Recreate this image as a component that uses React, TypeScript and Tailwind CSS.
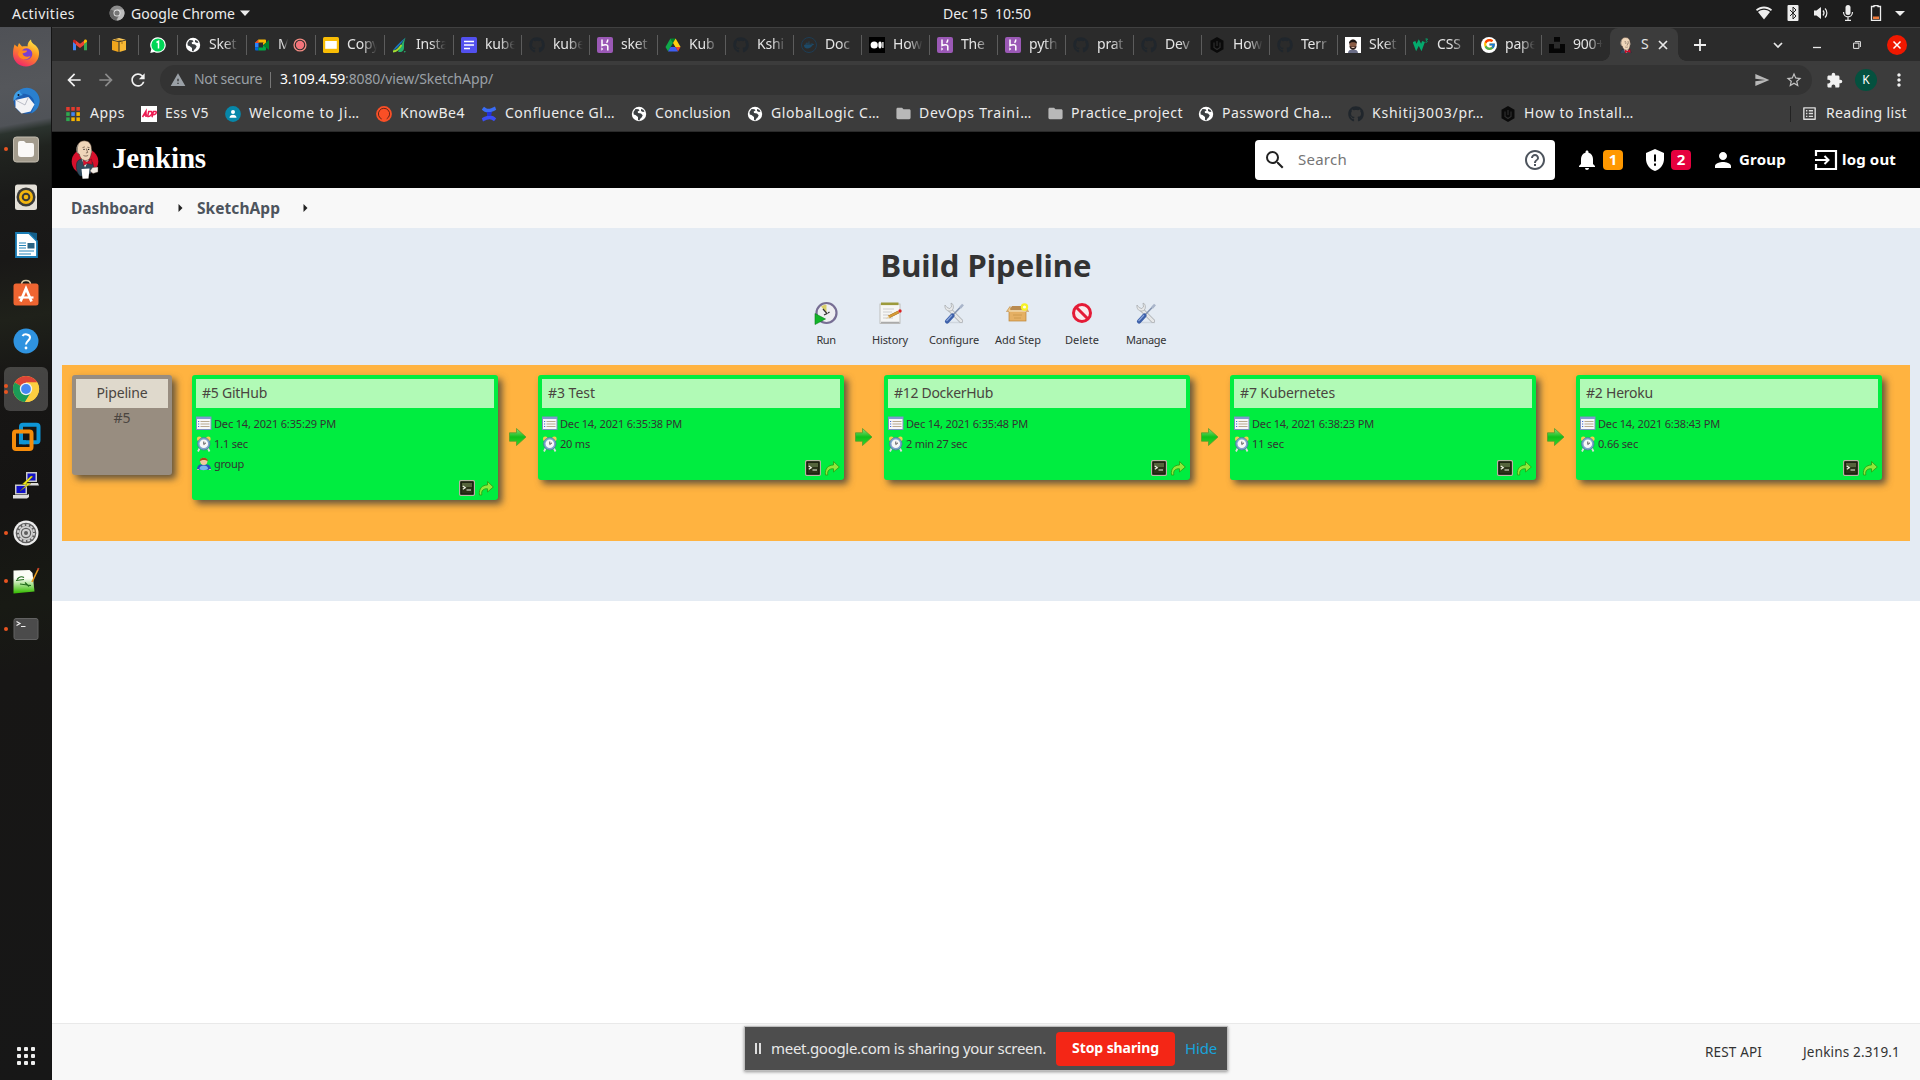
import { useLayoutEffect, useRef, useState } from "react";
import type { ReactNode } from "react";
import {
  MdArrowBack, MdArrowForward, MdRefresh, MdWarning, MdMoreVert, MdFolder, MdExtension, MdSend,
  MdStarBorder, MdNotifications, MdPerson, MdHelpOutline, MdSearch, MdOutlineListAlt,
} from "react-icons/md";
import { FaGithub, FaDocker } from "react-icons/fa";
import { FcGoogle } from "react-icons/fc";

/* Text that spreads its letters evenly over the width of its box. */
function Fit({ className, children }: { className: string; children: string }) {
  const inner = useRef<HTMLSpanElement>(null);
  const [spacing, setSpacing] = useState(0);
  useLayoutEffect(() => {
    const el = inner.current;
    if (!el || !el.parentElement) return;
    const room = el.parentElement.clientWidth - el.getBoundingClientRect().width;
    setSpacing(room / children.length);
  }, [children]);
  return (
    <span className={"block shrink-0 whitespace-pre " + className}>
      <span ref={inner} style={{ letterSpacing: spacing }}>{children}</span>
    </span>
  );
}

/* ---------- small logos ---------- */

function Svg({ s = 16, box = "0 0 16 16", children, className = "" }: { s?: number; box?: string; children: ReactNode; className?: string }) {
  return <svg width={s} height={s} viewBox={box} className={"shrink-0 " + className}>{children}</svg>;
}

const Gmail = () => (
  <Svg>
    <path d="M1 3.5v9.700h3V7L1 4.500z" fill="#4285f4" />
    <path d="M12 13.200h3V4.500L12 7z" fill="#34a853" />
    <path d="M12 3.800V7l3-2.300V4c0-1.600-1.600-2-2.500-1.200z" fill="#fbbc04" />
    <path d="M4 3.800l4 3 4-3V8l-4 3-4-3z" fill="#ea4335" />
    <path d="M1 4v1l3 2.600V3.800L3.300 3C2.300 2.300 1 2.700 1 4z" fill="#c5221f" />
  </Svg>
);
const Box = () => (
  <Svg>
    <path d="M1 3.500l6.500 1.500v10L1 13z" fill="#f0a51d" />
    <path d="M15 3.500L8.500 5v10L15 13z" fill="#f7b733" />
    <path d="M1.300 2.700L8 1l6.700 1.700L8 4.200z" fill="#fcc95a" />
    <path d="M4 2.200l7 1.800v3" fill="none" stroke="#8a5c0d" strokeWidth=".7" />
  </Svg>
);
const WhatsApp = () => (
  <Svg>
    <path d="M8 .2a7.800 7.800 0 1 1-3.700 14.700L.3 16l1-4A7.800 7.800 0 0 1 8 .2z" fill="#fff" />
    <circle cx="8" cy="8" r="6.600" fill="#00d757" />
    <path d="M6.500 5.500L8.500 4.300v7.200" fill="none" stroke="#fff" strokeWidth="1.500" />
  </Svg>
);
const Globe = () => (
  <Svg>
    <circle cx="8" cy="8" r="7.200" fill="#fff" />
    <path d="M4.500 3l3 .2 1 1.300-1.800 1 .3 1.600 3 .4 1.700 1.800-.9 2-1.800 1.700-.5 1.500L7 14v-3L4.500 9 2.700 8.600 2.500 6zM10 3l2.300.7 1.200 1.800-1.500.5-2-1z" fill="#3c4043" />
  </Svg>
);
const Meet = () => (
  <Svg>
    <path d="M1 6l3.500-3.500H10V5.500H4.500V6z" fill="#fbbc04" />
    <path d="M1 6l3.500-3.500V6z" fill="#ea4335" />
    <path d="M1 6h3.500v4.500H1z" fill="#2684fc" />
    <path d="M1 10.500h3.500v3H2a1 1 0 0 1-1-1z" fill="#0066da" />
    <path d="M4.500 10.500H9V8l3 2.500v2a1 1 0 0 1-1 1H4.500z" fill="#00ac47" />
    <path d="M9 8l6-5v10l-3-2.500z" fill="#00832d" />
    <path d="M10 2.500h1a1 1 0 0 1 1 1v2L9 8V5.500h1z" fill="#ffba00" />
  </Svg>
);
const Recording = () => (
  <Svg s={14}>
    <circle cx="8" cy="8" r="6.800" fill="none" stroke="#f28b82" strokeWidth="1.500" />
    <circle cx="8" cy="8" r="4.800" fill="#f4737a" />
  </Svg>
);
const Slides = () => (
  <Svg><rect width="16" height="16" rx="1.500" fill="#f9bd05" /><rect x="2.200" y="4" width="11.600" height="7.800" fill="#fff" /></Svg>
);
const Leaf = () => (
  <Svg>
    <path d="M13.500 .5C9 4 4 9 .8 13.500 4 13 8 8 13.500 .5z" fill="#1677c4" />
    <path d="M13.500 .5C9.500 6 9 9 6 14.500c1 .8 3 .8 4 0 2.500-1.500 2-4 2-7 0-3 1-5 1.500-7z" fill="#25b06b" />
    <path d="M1 14.500c3.500-.2 6-2.500 8.500-6.500" fill="none" stroke="#a2dc31" strokeWidth="1.800" />
    <path d="M12 14.800l1.500-.3" stroke="#25b06b" strokeWidth="1.200" />
  </Svg>
);
const Forms = () => (
  <Svg><rect width="16" height="16" rx="1.500" fill="#5250ee" /><path d="M3 4.500h10M3 8h10M3 11.500h6" stroke="#fff" strokeWidth="1.600" /></Svg>
);
const Heroku = () => (
  <Svg>
    <rect width="16" height="16" rx="2" fill="#9b59b6" />
    <path d="M5 2.500v6c2-1 5.800-1.500 5.800.8v4.200M10.800 2.500c0 1.500-.5 2.500-1.300 3.200" fill="none" stroke="#fff" strokeWidth="1.500" />
    <path d="M4.300 10.300l2 1.700-2 1.700z" fill="#fff" />
  </Svg>
);
const Drive = () => (
  <Svg>
    <path d="M5.400 1.500h5.200L8 6z" fill="#00832d" /><path d="M5.400 1.500L.5 10l2.600 4.500L8 6z" fill="#0fa84a" />
    <path d="M10.600 1.500l5 8.500h-5.200L8 6z" fill="#ffcf10" /><path d="M15.500 10L13 14.500 10.400 10z" fill="#ea4335" />
    <path d="M5.600 10h4.800L13 14.500H3z" fill="#3f5ff3" />
  </Svg>
);
const Medium = () => (
  <Svg><rect width="16" height="16" fill="#000" /><circle cx="5.200" cy="8" r="3.600" fill="#fff" /><ellipse cx="11" cy="8" rx="1.700" ry="3.400" fill="#fff" /><rect x="13.300" y="5" width="1.200" height="6" fill="#fff" /></Svg>
);
const Hex = () => (
  <Svg><path d="M8 0l6.500 3.800v8.400L8 16l-6.500-3.800V3.800z" fill="#0a0a0a" /><path d="M5 5.500v5l3 2 3-2v-5M8 4v5" fill="none" stroke="#2e2e2e" strokeWidth="1.200" /></Svg>
);
const Octo = () => <FaGithub size={16} color="#20262c" className="shrink-0" />;
const Docker = () => (
  <span className="flex size-4 shrink-0 items-center justify-center rounded-full border border-[#1d3d55] text-[#1d4a68]"><FaDocker size={10} /></span>
);
const Portrait = () => (
  <Svg>
    <rect width="16" height="16" fill="#fff" /><path d="M3 16c0-2.500 2-3.500 5-3.500s5 1 5 3.500z" fill="#6a6d86" />
    <ellipse cx="8" cy="7.500" rx="3.600" ry="4.800" fill="#8a5c46" /><path d="M4 7c-.5-6 8.500-6 8 0-1-2.500-7-2.500-8 0z" fill="#1c1514" />
    <path d="M4.500 9c1 1 6 1 7 0 0 5-7 5-7 0z" fill="#2c1d1a" /><path d="M6.500 10.500h3" stroke="#d9b7a6" />
  </Svg>
);
const W3 = () => (
  <Svg><path d="M1 4.500l2.300 6L5.800 5.500l2.500 5 2.200-6" fill="none" stroke="#04aa6d" strokeWidth="3" /><path d="M12.500 2h2l-1.200 1.500c1.500.2 1.200 2.200-.8 1.700" fill="none" stroke="#04aa6d" /></Svg>
);
const GoogleG = () => (
  <span className="flex size-4 shrink-0 items-center justify-center rounded-full bg-white"><FcGoogle size={13} /></span>
);
const Unsplash = () => <Svg><path d="M5 0h6v4.700H5zM0 7h5v4.500h6V7h5v9H0z" fill="#050505" /></Svg>;

function Butler({ w, h, box, badge = true }: { w: number; h: number; box: string; badge?: boolean }) {
  return (
    <svg width={w} height={h} viewBox={box} className="shrink-0">
      {badge && <ellipse cx="14" cy="21.500" rx="13.300" ry="12.800" fill="#d6102c" />}
      <path d="M5.500 24c.5-3.500 3-5 6-5l6 .5c3 .5 4.500 3 5 7l-2 6-5 3.500H9c-3-3-4.200-7-3.500-12z" fill="#2f4a5c" stroke="#16242e" strokeWidth=".5" />
      <path d="M10.500 18.500l3.500 9 4-8z" fill="#f4f0e9" />
      <path d="M6.200 8.500C6 4 9 .8 13.200 .8c4.800 0 7.300 3.200 7.300 8.200 0 6-1 11.500-5.800 11.500-3.700 0-5.700-3-6.500-6.500-1.700-.3-2.500-2-2-5.500z" fill="#efd6ba" stroke="#4b3a30" strokeWidth=".6" />
      <path d="M6.200 9c.8-1.300 1.300-3 1.600-5C5.300 5.500 4.700 9 5.800 12.500l1.900 1.200z" fill="#9b9186" />
      <path d="M20.500 8.500c.7 1.500.8 3 .3 4.500l-.8-.5z" fill="#9b9186" />
      <path d="M11.500 7.600l2.400-.7M16.300 7.200l2.200.4M15.300 8.500l1.400 4-1.800.5M12.500 15.500c1.700.8 3.300.8 4.700-.2" fill="none" stroke="#5b463a" strokeWidth=".7" />
      <circle cx="13" cy="9.400" r=".7" fill="#222" /><circle cx="17.600" cy="9.400" r=".7" fill="#222" />
      <path d="M12 20l4 2 4.500-3 .8 5.500-5-1-3.800 2z" fill="#d6102c" stroke="#5c0b18" strokeWidth=".4" />
      <path d="M10.500 29l8-.5-1 10-6 .3z" fill="#fff" />
      <path d="M21.500 27.500l5.500-.5v5l-5 1.500-3-2.500z" fill="#f2ede6" stroke="#4b3a30" strokeWidth=".4" />
    </svg>
  );
}

const AppsGrid = () => (
  <Svg>
    {["#e33b2e", "#e33b2e", "#e33b2e", "#2fa84f", "#4285f4", "#f5b400", "#2fa84f", "#f5b400", "#f5b400"].map((c, i) => (
      <rect key={i} x={1.2 + (i % 3) * 5.1} y={1 + Math.floor(i / 3) * 5.2} width="3.500" height="3.700" fill={c} />
    ))}
  </Svg>
);
const Adp = () => (
  <Svg>
    <rect width="16" height="16" fill="#fff" />
    <path d="M1.500 11l3.500-6v6M3 9h3M6.500 10.800L7.700 5.500h2.600c1.500 1.500 0 5.300-3.800 5.300M11 11.300l1.400-5.800H15c.8 1.500-.5 3.200-3 3.200" fill="none" stroke="#ed1b52" strokeWidth="1.500" />
  </Svg>
);
const Person = () => (
  <Svg><circle cx="8" cy="8" r="7.900" fill="#0787a9" /><circle cx="8" cy="6" r="2" fill="#fff" /><path d="M4.500 11.800c0-4 7-4 7 0z" fill="#fff" /></Svg>
);
const KnowBe = () => (
  <Svg><circle cx="8" cy="8" r="7.900" fill="#fa4f26" /><path d="M5.700 13a5.600 5.600 0 1 1 5-.2" fill="none" stroke="#4f1f16" strokeWidth=".9" /></Svg>
);
const Confluence = () => (
  <Svg><path d="M.8 3.500L3 .8c3 2.500 5 3 11-.3l1.200 3.300C9 7.500 4 7.500 .8 3.500z" fill="#3a6cf5" /><path d="M15.200 12.500L13 15.200c-3-2.500-5-3-11 .3L.8 12.200C7 8.500 12 8.500 15.200 12.500z" fill="#3a4cf5" /><path d="M6 6h5l-1 4H6z" fill="#2430d8" /></Svg>
);
const FolderIcon = () => <MdFolder size={17} color="#b8b8b8" className="shrink-0" />;

/* ---------- desktop ---------- */

function TopBar() {
  return (
    <div className="flex h-[27px] shrink-0 items-center bg-[#1d1d1d] pb-px text-[14px] leading-[27px] text-[#ededed]">
      <Fit className="ml-3 w-[63px]">Activities</Fit>
      <Svg s={16} className="ml-[34px]">
        <circle cx="8" cy="8" r="7.500" fill="#8c8c8c" /><path d="M8 8L1.500 4.300A7.500 7.500 0 0 0 7 15.400l3-6z" fill="#666" /><path d="M8 4.500h6.600a7.500 7.500 0 0 1-7 11L11 9z" fill="#bdbdbd" /><circle cx="8" cy="8" r="3.500" fill="#e5e5e5" /><circle cx="8" cy="8" r="2.600" fill="#777" />
      </Svg>
      <Fit className="ml-[6px] w-[104px]">Google Chrome</Fit>
      <Svg s={10} box="0 0 10 10" className="ml-[5px]"><path d="M0 2.500h10L5 8z" fill="#ededed" /></Svg>
      <Fit className="ml-[693px] w-[88px]">Dec 15  10:50</Fit>
      <div className="ml-auto mr-[15px] flex items-center">
        <Svg className="mr-[13px]"><path d="M0 4.500C4.500 .5 11.500 .5 16 4.500L15 6C11 2.500 5 2.500 1 6z" fill="#ededed" /><path d="M2 7c3.500-3 8.500-3 12 0l-6 7.500z" fill="#ededed" /></Svg>
        <Svg className="mr-[12px]"><rect x="2.500" y="0" width="11" height="16" rx="1" fill="#ededed" /><path d="M5 5l6 6-3 3V2l3 3-6 6" fill="none" stroke="#222" strokeWidth="1" /></Svg>
        <Svg className="mr-[11px]"><path d="M1 5.500h2.500L8 2v12l-4.500-3.500H1z" fill="#ededed" /><path d="M10 5.500c1.300 1.500 1.300 3.500 0 5M12 3.500c2.500 2.500 2.500 6.500 0 9" fill="none" stroke="#ededed" strokeWidth="1.200" /></Svg>
        <Svg className="mr-[12px]"><rect x="5.500" y="0" width="5" height="10" rx="2.500" fill="#ededed" /><path d="M3.500 7c0 6.500 9 6.500 9 0M8 12v3M5 15.300h6" fill="none" stroke="#ededed" strokeWidth="1.200" /></Svg>
        <Svg className="mr-[11px]"><path d="M6 1.500V.5h4v1h2.500v14h-9v-14z" fill="none" stroke="#ededed" strokeWidth="1.300" /><rect x="5" y="11.500" width="6" height="2.600" fill="#ee7a3a" /></Svg>
        <Svg s={10} box="0 0 10 10"><path d="M0 3h10L5 8z" fill="#ededed" /></Svg>
      </div>
    </div>
  );
}

const dock: { dots: number; active?: boolean; icon: ReactNode }[] = [
  { dots: 0, icon: (
    <Svg s={28} box="0 0 28 28">
      <defs>
        <linearGradient id="fx" x1=".8" y1="0" x2=".3" y2="1"><stop offset="0" stopColor="#fff04a" /><stop offset=".45" stopColor="#ff9420" /><stop offset="1" stopColor="#f0246c" /></linearGradient>
      </defs>
      <path d="M2.500 5.500l3 2.500 1.500-4 3 3.500c2-.5 4-.5 5.500 0C15.500 4 17 2 19 .5c0 3 2 4 4 5.500 2.500 2 4.500 5 4 9.500C26.500 22.500 21 27.500 14 27.500S1 22 1 15c0-4 .5-6 1.500-9.500z" fill="url(#fx)" />
      <circle cx="14.500" cy="15" r="5.800" fill="#7a3fd0" />
      <path d="M7 12c3-1.500 5 0 8-.5 0 2-2.500 2.500-4.500 3 1 3.500 5 4 8 2.500-2 5-11.500 4.500-12.500-2z" fill="#ff8a1f" />
    </Svg>) },
  { dots: 0, icon: (
    <Svg s={28} box="0 0 28 28">
      <circle cx="14.500" cy="14" r="12.800" fill="#1c5fb4" />
      <path d="M3 9C6 2 13-.5 19 1.500c7 2.500 10 10 8 16-1 4-4 7.500-8 9 4-7 5-14-1-18-5-3-11-2-15 .5z" fill="#2a80d0" />
      <path d="M3.500 13l13-3 6 7.500-4 7-9 2-6-6z" fill="#f3f3f5" /><path d="M3.500 13l9.500 5 3.500-8" fill="none" stroke="#b9bcc6" />
      <path d="M1.500 14C1 8 4 4 8 3.500c-1 1.500 1 3 3 4.500-3 0-6 2-9.500 6z" fill="#3f9fe6" />
      <circle cx="6.500" cy="8" r="1" fill="#112" />
    </Svg>) },
  { dots: 1, icon: (
    <Svg s={28} box="0 0 28 28"><rect x="1.500" y="2" width="25" height="25" rx="3" fill="#a39c8d" stroke="#c3bdb0" /><path d="M6 8a2 2 0 0 1 2-2h4l2 2h6a2 2 0 0 1 2 2v9a3 3 0 0 1-3 3H9a3 3 0 0 1-3-3z" fill="#faf9f7" /></Svg>) },
  { dots: 0, icon: (
    <Svg s={28} box="0 0 28 28"><rect x="3" y="1.500" width="22" height="25.500" rx="2.500" fill="#e4e0d8" /><circle cx="14" cy="14" r="9.500" fill="#3a3a38" /><circle cx="14" cy="14" r="7" fill="#f3b60e" /><circle cx="14" cy="14" r="4.300" fill="#3a3a38" /><circle cx="14" cy="14" r="2.300" fill="#f3b60e" /></Svg>) },
  { dots: 0, icon: (
    <Svg s={28} box="0 0 28 28"><path d="M4 2h13l8 8v16H4z" fill="#fff" stroke="#1a7db5" strokeWidth="1.800" /><path d="M17 1l8 8V2z" fill="#155f8a" /><path d="M7 12h7M7 14.500h7M7 17h7M7 20h15M7 23h12" stroke="#2484b8" strokeWidth="1.200" /><rect x="15.500" y="12" width="7" height="5.500" fill="#2a6383" /></Svg>) },
  { dots: 0, icon: (
    <Svg s={28} box="0 0 28 28"><path d="M9.500 5.500c0-5.500 9-5.500 9 0" fill="none" stroke="#d8c9a4" strokeWidth="1.500" /><rect x="1.500" y="4.500" width="25" height="22" rx="2.500" fill="#ee6531" /><path d="M8.500 22.500L14 9.500l5.500 13" fill="none" stroke="#fff" strokeWidth="2.700" /><path d="M6.500 18.500h15" stroke="#fff" strokeWidth="2.200" /></Svg>) },
  { dots: 0, icon: (
    <Svg s={28} box="0 0 28 28"><circle cx="14" cy="14" r="12.500" fill="#2f93e0" /><path d="M10.500 9c1.500-2.500 7.500-2.300 7.500 1.500 0 3-4 3.500-4 7" fill="none" stroke="#fff" strokeWidth="2" /><circle cx="14" cy="21" r="1.400" fill="#fff" /></Svg>) },
  { dots: 2, active: true, icon: (
    <Svg s={28} box="0 0 28 28">
      <circle cx="14" cy="14" r="13" fill="#fcc934" /><path d="M14 14L2.700 7.500A13 13 0 0 1 25.300 7.500H14z" fill="#dc4437" /><path d="M14 14L2.700 7.500A13 13 0 0 0 13 27l6-10z" fill="#1b9b57" /><path d="M14 7.500h11.300A13 13 0 0 1 13 27l6.200-9.500z" fill="#fcce41" />
      <circle cx="14" cy="14" r="6.200" fill="#f1f1f1" /><circle cx="14" cy="14" r="4.900" fill="#4587f3" />
    </Svg>) },
  { dots: 0, icon: (
    <Svg s={30} box="0 0 30 30"><rect x="10" y="2.800" width="17.500" height="17.500" rx="2" fill="none" stroke="#0e96d7" strokeWidth="4" /><rect x="3" y="9.500" width="17.500" height="17.500" rx="2" fill="none" stroke="#f68c0a" strokeWidth="4" /><path d="M10 13v7.300h5" fill="none" stroke="#0e96d7" strokeWidth="4" /></Svg>) },
  { dots: 0, icon: (
    <Svg s={28} box="0 0 28 28"><rect x="14" y="1" width="11" height="10" fill="#c9c9c9" /><rect x="15.500" y="2.500" width="8" height="7" fill="#1010c8" /><path d="M12 12h14l1 2.500H12z" fill="#dcdcdc" /><rect x="3" y="13.500" width="12" height="10" fill="#c9c9c9" /><rect x="4.500" y="15" width="9" height="7" fill="#1010c8" /><path d="M1 24h14l2-1v3l-2 1.500H1z" fill="#dcdcdc" /><path d="M19 5l-9 8.500h5L8 20l11-7.500h-5l7-7z" fill="#f5ee12" stroke="#6b6800" strokeWidth=".4" /></Svg>) },
  { dots: 1, icon: (
    <Svg s={28} box="0 0 28 28"><circle cx="14" cy="14" r="12.500" fill="#ececec" /><circle cx="14" cy="14" r="10.300" fill="#5e5e5e" /><circle cx="14" cy="14" r="8" fill="none" stroke="#d2d2d2" strokeWidth="2" strokeDasharray="2.600 1.600" /><circle cx="14" cy="14" r="7" fill="#d2d2d2" /><circle cx="14" cy="14" r="5.200" fill="#5e5e5e" /><circle cx="14" cy="14" r="4" fill="#d2d2d2" /><circle cx="14" cy="14" r="2" fill="#5e5e5e" /></Svg>) },
  { dots: 1, icon: (
    <Svg s={28} box="0 0 28 28">
      <defs><linearGradient id="np" x1="0" y1="0" x2="0" y2="1"><stop offset=".35" stopColor="#fbfdf6" /><stop offset=".95" stopColor="#3fbf0c" /></linearGradient></defs>
      <path d="M1.500 3.500l16-.5 3 3 2 18.500-21 2z" fill="url(#np)" /><path d="M5 12.500c1.500-2.500 4.500-3.500 7-2M4 13.500l8-1M8 17l11 1.500M13 15.500l4 4" stroke="#226b1c" strokeWidth="1.200" fill="none" /><path d="M20 15l6.500-13.500" stroke="#e99a1c" strokeWidth="1.600" /><path d="M25.700 3.200l1-2.200" stroke="#c0392b" strokeWidth="1.600" />
    </Svg>) },
  { dots: 1, icon: (
    <Svg s={28} box="0 0 28 28"><rect x="2" y="3.500" width="24" height="21" rx="2" fill="#4b4b4b" stroke="#626262" /><path d="M4.500 6.500l3.500 2-3.500 2M9 11.500h4.500" fill="none" stroke="#eee" strokeWidth="1.200" /></Svg>) },
];

function Dock() {
  return (
    <div className="flex w-[52px] shrink-0 flex-col items-center border-r border-[#141414] bg-[linear-gradient(170deg,#4f5156_0px,#55575b_60px,#505358_98px,#2b332e_106px,#20231f_125px,#1a1a19_170px,#191817_230px,#1f211a_290px,#171615_350px,#151413_470px,#181a14_570px,#171615_640px,#171717_100%)] pt-0.5">
      {dock.map((item, i) => (
        <div key={i} className="flex h-12 w-full items-center">
          <div className="flex w-1 shrink-0 translate-x-1 flex-col items-end gap-0.5">
            {Array.from({ length: item.dots }, (_, d) => <span key={d} className="size-1 rounded-full bg-[#e95420]" />)}
          </div>
          <div className={item.active ? "flex size-11 items-center justify-center rounded-md bg-white/20" : "flex size-11 items-center justify-center"}>
            {item.icon}
          </div>
        </div>
      ))}
      <div className="mt-auto mb-[15px] grid grid-cols-3 gap-[3px]">
        {Array.from({ length: 9 }, (_, i) => <span key={i} className="size-1 rounded-[1px] bg-[#eee]" />)}
      </div>
    </div>
  );
}

/* ---------- browser ---------- */

const tabs: { w: string; icon: ReactNode; text: string; rec?: boolean }[] = [
  { w: "w-[69px]", icon: <Globe />, text: "Sket" },
  { w: "w-[69px]", icon: <Meet />, text: "M", rec: true },
  { w: "w-[69px]", icon: <Slides />, text: "Copy" },
  { w: "w-[69px]", icon: <Leaf />, text: "Insta" },
  { w: "w-[68px]", icon: <Forms />, text: "kube" },
  { w: "w-[68px]", icon: <Octo />, text: "kube" },
  { w: "w-[68px]", icon: <Heroku />, text: "sket" },
  { w: "w-[68px]", icon: <Drive />, text: "Kub" },
  { w: "w-[68px]", icon: <Octo />, text: "Kshi" },
  { w: "w-[68px]", icon: <Docker />, text: "Doc" },
  { w: "w-[68px]", icon: <Medium />, text: "How" },
  { w: "w-[68px]", icon: <Heroku />, text: "The" },
  { w: "w-[68px]", icon: <Heroku />, text: "pyth" },
  { w: "w-[68px]", icon: <Octo />, text: "prat" },
  { w: "w-[68px]", icon: <Octo />, text: "Dev" },
  { w: "w-[68px]", icon: <Hex />, text: "How" },
  { w: "w-[68px]", icon: <Octo />, text: "Terr" },
  { w: "w-[68px]", icon: <Portrait />, text: "Sket" },
  { w: "w-[68px]", icon: <W3 />, text: "CSS" },
  { w: "w-[68px]", icon: <GoogleG />, text: "pape" },
  { w: "w-[68px]", icon: <Unsplash />, text: "900+" },
];

function TabStrip() {
  return (
    <div className="flex h-[34px] items-center border-t border-[#404040] bg-[#2b2b2b] text-[14px] leading-5 text-[#e4e4e4]">
      <div className="flex w-12 items-center justify-end"><Gmail /><i className="ml-[11px] h-5 w-px bg-[#5c5c5c]" /></div>
      <div className="flex w-[39px] items-center justify-end"><Box /><i className="ml-[11px] h-5 w-px bg-[#5c5c5c]" /></div>
      <div className="flex w-[39px] items-center justify-end"><WhatsApp /><i className="ml-[11px] h-5 w-px bg-[#5c5c5c]" /></div>
      {tabs.map((t, i) => (
        <div key={i} className={"flex shrink-0 items-center pl-[7px] " + t.w}>
          {t.icon}
          <span className={(t.rec ? "w-[10px]" : "w-[30px]") + " -mt-0.5 ml-2 overflow-hidden whitespace-nowrap tracking-[-0.2px] [mask-image:linear-gradient(90deg,#000_50%,transparent)]"}>{t.text}</span>
          {t.rec && <span className="ml-[5px]"><Recording /></span>}
          {i < tabs.length - 1 && <i className="ml-auto h-5 w-px bg-[#5c5c5c]" />}
        </div>
      ))}
      <div className="relative flex h-full w-[68px] shrink-0 items-center rounded-t-lg bg-[#3c3c3c] pl-2">
        <span className="absolute -left-2 bottom-0 size-2 bg-[radial-gradient(circle_at_0_0,transparent_7.500px,#3c3c3c_8px)]" />
        <span className="absolute -right-2 bottom-0 size-2 bg-[radial-gradient(circle_at_100%_0,transparent_7.500px,#3c3c3c_8px)]" />
        <Butler w={16} h={16} box="1.500 0 25 25" badge={false} />
        <span className="-mt-0.5 ml-[7px] w-[9px]">S</span>
        <Svg s={10} box="0 0 10 10" className="ml-[8px]"><path d="M1 1l8 8M9 1L1 9" stroke="#e8e8e8" strokeWidth="1.700" /></Svg>
      </div>
      <Svg s={12} box="0 0 12 12" className="ml-4"><path d="M6 0v12M0 6h12" stroke="#eee" strokeWidth="1.800" /></Svg>
      <div className="ml-auto mr-[13px] flex items-center">
        <Svg s={10} box="0 0 10 10" className="mr-[30px]"><path d="M1 3l4 4 4-4" fill="none" stroke="#e8e8e8" strokeWidth="1.700" /></Svg>
        <Svg s={8} box="0 0 8 8" className="mr-8"><path d="M0 6.500h8" stroke="#e8e8e8" strokeWidth="1.300" /></Svg>
        <Svg s={8} box="0 0 8 8" className="mr-[26px]"><path d="M.6 2.100h5.300v5.300H.6zM2 .6h5.400V6" fill="none" stroke="#e8e8e8" strokeWidth="1" /></Svg>
        <Svg s={20} box="0 0 20 20"><circle cx="10" cy="10" r="10" fill="#f01800" /><path d="M6.500 6.500l7 7M13.500 6.500l-7 7" stroke="#fff" strokeWidth="1.500" /></Svg>
      </div>
    </div>
  );
}

function Toolbar() {
  return (
    <div className="flex h-[38px] items-center bg-[#3c3c3c] text-[14px] leading-5">
      <MdArrowBack size={20} color="#f1f1f1" className="ml-3" />
      <MdArrowForward size={20} color="#8b8b8b" className="ml-3" />
      <MdRefresh size={20} color="#f1f1f1" className="ml-3" />
      <div className="ml-3 flex h-[30px] w-[1652px] items-center rounded-full bg-[#333] pl-[10px] text-[#9aa0a6]">
        <MdWarning size={16} />
        <Fit className="-mt-0.5 ml-[8px] w-[68px]">Not secure</Fit>
        <i className="mx-[9px] ml-[8px] h-4 w-px bg-[#777]" />
        <Fit className="-mt-0.5 w-[65px] text-white">3.109.4.59</Fit>
        <Fit className="-mt-0.5 w-[148px]">:8080/view/SketchApp/</Fit>
        <MdSend size={16} color="#b8b8b8" className="ml-auto mr-[15px]" />
        <MdStarBorder size={18} color="#c4c4c4" className="mr-[9px]" />
      </div>
      <MdExtension size={17} color="#f1f1f1" className="ml-[14px]" />
      <span className="ml-[12px] flex size-[22px] items-center justify-center rounded-full bg-[#04513f] text-[12px] text-white">K</span>
      <MdMoreVert size={20} color="#f1f1f1" className="ml-[12px]" />
    </div>
  );
}

const bookmarks: { icon: ReactNode; text: string; w: string }[] = [
  { icon: <AppsGrid />, text: "Apps", w: "ml-[9px] w-[35px] mr-4" },
  { icon: <Adp />, text: "Ess V5", w: "ml-2 w-[44px] mr-4" },
  { icon: <Person />, text: "Welcome to Ji…", w: "ml-2 w-[111px] mr-4" },
  { icon: <KnowBe />, text: "KnowBe4", w: "ml-2 w-[65px] mr-4" },
  { icon: <Confluence />, text: "Confluence Gl…", w: "ml-2 w-[110px] mr-4" },
  { icon: <Globe />, text: "Conclusion", w: "ml-2 w-[76px] mr-4" },
  { icon: <Globe />, text: "GlobalLogic C…", w: "ml-2 w-[109px] mr-[15px]" },
  { icon: <FolderIcon />, text: "DevOps Traini…", w: "ml-[7px] w-[113px] mr-[15px]" },
  { icon: <FolderIcon />, text: "Practice_project", w: "ml-[7px] w-[112px] mr-[15px]" },
  { icon: <Globe />, text: "Password Cha…", w: "ml-2 w-[110px] mr-4" },
  { icon: <Octo />, text: "Kshitij3003/pr…", w: "ml-2 w-[112px] mr-4" },
  { icon: <Hex />, text: "How to Install…", w: "ml-2 w-[110px]" },
];

function Bookmarks() {
  return (
    <div className="flex h-[33px] items-center border-b border-[#2a2a2a] bg-[#3c3c3c] pb-[3px] pl-[13px] text-[14px] leading-[28px] text-[#ececec]">
      {bookmarks.map((b) => (
        <div key={b.text} className="flex h-7 shrink-0 items-center">{b.icon}<Fit className={"-mt-px " + b.w}>{b.text}</Fit></div>
      ))}
      <div className="ml-auto mr-[13px] flex items-center">
        <i className="mr-[10px] h-4 w-px bg-[#222]" />
        <MdOutlineListAlt size={17} color="#dcdcdc" />
        <Fit className="-mt-px ml-[8px] w-[81px]">Reading list</Fit>
      </div>
    </div>
  );
}

/* ---------- Jenkins ---------- */

function JenkinsHeader() {
  return (
    <div className="flex h-14 items-center bg-black text-[15px] font-bold leading-5 text-white">
      <span className="ml-[19px]"><Butler w={28} h={40} box="0 0 28 40" /></span>
      <Fit className="ml-[13px] w-[94px] pb-[5px] font-['Liberation_Serif',serif] text-[29px] leading-8">Jenkins</Fit>
      <div className="ml-auto flex h-10 w-[300px] items-center rounded bg-white pl-[8px] pr-[8px] font-normal text-[#757575]">
        <MdSearch size={24} color="#222" />
        <Fit className="-mt-0.5 ml-[11px] w-[49px]">Search</Fit>
        <MdHelpOutline size={24} color="#4d545d" className="ml-auto" />
      </div>
      <MdNotifications size={24} className="ml-5" />
      <span className="ml-[4px] flex size-5 items-center justify-center rounded bg-[#ff9800] pb-0.5 text-[15px]">1</span>
      <Svg s={24} box="0 0 24 24" className="ml-5"><path d="M12 1l9 4v6c0 5.500-3.800 10.700-9 12-5.200-1.300-9-6.500-9-12V5z" fill="#fff" /><path d="M12 6.500v7M12 15.500v2.200" stroke="#000" strokeWidth="2" /></Svg>
      <span className="ml-[4px] flex size-5 items-center justify-center rounded bg-[#e6003e] pb-0.5 text-[15px]">2</span>
      <MdPerson size={24} className="ml-5" />
      <Fit className="-mt-0.5 ml-[4px] w-[47px]">Group</Fit>
      <Svg s={24} box="0 0 24 24" className="ml-[28px]"><path d="M2 8V3h20v18H2v-5" fill="none" stroke="#fff" strokeWidth="2.200" /><path d="M1 12h13M10.500 8l4 4-4 4" fill="none" stroke="#fff" strokeWidth="2" /></Svg>
      <Fit className="-mt-0.5 ml-[4px] mr-[24px] w-[54px]">log out</Fit>
    </div>
  );
}

const Caret = ({ className }: { className: string }) => (
  <Svg s={8} box="0 0 8 8" className={className}><path d="M2.500 0l4 4-4 4z" fill="#222" /></Svg>
);

function Breadcrumbs() {
  return (
    <div className="flex h-10 items-center bg-[#f8f8f8] pl-[19px] text-[15.500px] font-bold leading-10 text-[#4d545d]">
      <Fit className="w-[83px]">Dashboard</Fit>
      <Caret className="ml-[22px] mr-[13px]" />
      <Fit className="w-[83px]">SketchApp</Fit>
      <Caret className="ml-[21px]" />
    </div>
  );
}

const Tools = () => (
  <Svg s={24} box="0 0 24 24">
    <path d="M5 21.500h16" stroke="#c4cad2" strokeWidth="1.500" opacity=".6" />
    <path d="M8 9l11 11" stroke="#a9acb0" strokeWidth="4" strokeLinecap="round" /><path d="M8 9l11 11" stroke="#e6e7e8" strokeWidth="2.600" strokeLinecap="round" />
    <path d="M3 4c-.5 3 1 6 4.500 6S12 7 11 3.500L9 2l.5 4-2 1.500L5 6.500z" fill="#e8e9ea" stroke="#a3a7ab" strokeWidth=".7" />
    <path d="M20 4.500L11 14" stroke="#8393b0" strokeWidth="1.600" /><path d="M21 3.500l-3 3.500" stroke="#a9b5ca" strokeWidth="2.600" />
    <path d="M10.500 14.500l-5.500 6" stroke="#3c5fa8" strokeWidth="4.200" strokeLinecap="round" /><path d="M10 14l-5.500 6" stroke="#8aa6dc" strokeWidth="1.200" />
  </Svg>
);

const actions: { label: string; w: string; icon: ReactNode }[] = [
  { label: "Run", w: "w-[19px]", icon: (
    <Svg s={24} box="0 0 24 24"><circle cx="12.500" cy="12" r="10" fill="#eeeef1" stroke="#776e94" strokeWidth="2.200" /><path d="M12.500 12L7 5.500C9 4 11 3.600 12.500 3.800z" fill="#d9cf6a" /><path d="M9 8l4 4.500-3 1.500M14 12l1.500-1" fill="none" stroke="#333" strokeWidth="1.200" /><path d="M1 12.500l10.500 5.500L1 23.500z" fill="#12b529" stroke="#0a7d1c" strokeWidth=".6" /></Svg>) },
  { label: "History", w: "w-[36px]", icon: (
    <Svg s={24} box="0 0 24 24"><rect x="2" y="3" width="20" height="19.500" fill="#f6f6f5" stroke="#b4b4b0" strokeWidth=".8" /><path d="M3 21.500h18.500" stroke="#aaa" strokeWidth="1.500" /><rect x="3" y="1.500" width="17.500" height="2.600" fill="#9c9a3c" /><path d="M5 8h11M5 11h9M5 14h6M5 17h10" stroke="#c5c5c5" strokeWidth=".8" /><path d="M20.500 11L10.500 16" stroke="#9a6a18" strokeWidth="3" /><path d="M20.500 11L10.500 16" stroke="#d69a36" strokeWidth="2" /><path d="M10.800 14.700l.8 2.200L7.500 18z" fill="#ead5a9" /><circle cx="22" cy="10" r="1.700" fill="#db2222" /></Svg>) },
  { label: "Configure", w: "w-[50px]", icon: <Tools /> },
  { label: "Add Step", w: "w-[46px]", icon: (
    <Svg s={24} box="0 0 24 24"><path d="M3 9.500L6 5h12l3 4.500z" fill="#b98a50" /><rect x="3" y="10" width="17" height="10" fill="#e5b064" stroke="#bd8535" strokeWidth=".7" /><path d="M.5 10.500L4 5.500 5 10zM22.500 10.500L19.500 5.500v4.500z" fill="#efc98c" stroke="#bd8535" strokeWidth=".6" /><path d="M3 10h17" stroke="#f6dcae" strokeWidth="1.500" /><path d="M7 14h9M8 17h7" stroke="#c99849" strokeWidth=".8" /><circle cx="18.500" cy="6" r="3.700" fill="#f7f224" /><circle cx="18.500" cy="6" r="1.600" fill="#fffde0" /></Svg>) },
  { label: "Delete", w: "w-[34px]", icon: (
    <Svg s={24} box="0 0 24 24"><circle cx="12" cy="12" r="8.500" fill="#f9eaec" stroke="#e41b36" strokeWidth="3" /><path d="M6.500 6.500l11 11" stroke="#e41b36" strokeWidth="3" /></Svg>) },
  { label: "Manage", w: "w-[40px]", icon: <Tools /> },
];

const Calendar = () => (
  <Svg><rect x=".5" y="1" width="14.500" height="12.500" fill="#f7f7f9" stroke="#7f8fc0" /><rect x=".5" y="1" width="14.500" height="2" fill="#7f9ad0" /><path d="M2 5.500h1.200M2 8h1.200M2 10.500h1.200" stroke="#456cd0" strokeWidth="1.200" /><path d="M4.500 5.500h9M4.500 8h9M4.500 10.500h9" stroke="#b9a98f" /></Svg>
);
const Alarm = () => (
  <Svg>
    <path d="M3.500 12.500L2 15.500M12 12.500l1.500 3" stroke="#ddd" strokeWidth="1.800" /><circle cx="3.300" cy="3" r="2.400" fill="#f3cf52" /><circle cx="12.300" cy="3" r="2.400" fill="#f3cf52" />
    <circle cx="7.800" cy="7.800" r="6.200" fill="#7ea3cc" stroke="#4b729f" strokeWidth=".7" /><circle cx="7.800" cy="7.800" r="4.300" fill="#f7f7f7" /><path d="M7.800 5.500V8.500L10 6.800" fill="none" stroke="#444" strokeWidth=".9" />
  </Svg>
);
const User = () => (
  <Svg><path d="M1 14c0-4 2-5.500 3.500-5.500h6.500c2 0 4 1.500 4 5.500z" fill="#2b50b8" /><path d="M3.500 12.500C3.500 8.500 12 8.500 12 12.500c0 2-8.500 2.500-8.500 0z" fill="#75b4ee" /><path d="M1 14c0-1.300 2-1.300 2.500 0zM12.500 14c.5-1.300 2.500-1.300 2.500 0z" fill="#f0c9a0" /><circle cx="7.800" cy="5.300" r="3.600" fill="#f0c9a0" /><path d="M3.800 5.500C3 .5 12.500 .5 11.800 5.500c-1-2-7-2-8 0z" fill="#a64b18" /></Svg>
);
const Console = () => (
  <Svg><rect x=".6" y=".6" width="14.800" height="14.800" rx="1.500" fill="#2b3218" stroke="#b9b3a4" strokeWidth="1.300" /><rect x="2" y="2" width="12" height="12" fill="none" stroke="#151a0c" strokeWidth="1" /><path d="M3 3h10v4H3z" fill="#55643c" /><path d="M3.800 6l2.500 1.800-2.500 1.500M7.500 10h4.500" fill="none" stroke="#eef1e2" strokeWidth="1.200" /></Svg>
);
const Retry = () => (
  <Svg><path d="M1.500 15C.5 8.500 4.500 5 9.500 5V1.500L15.300 7l-5.800 5V8.800C5.500 8.500 3 10.500 3.800 15z" fill="#8fe83a" stroke="#2a9c12" strokeWidth=".8" /></Svg>
);
const Next = () => (
  <div className="flex w-10 justify-center pt-[52px]">
    <Svg s={20} box="0 0 20 20">
      <defs><linearGradient id="go" x1="0" y1="0" x2="0" y2="1"><stop offset="0" stopColor="#8fdc7c" /><stop offset=".5" stopColor="#10c01c" /><stop offset="1" stopColor="#2fd62a" /></linearGradient></defs>
      <path d="M1.500 5.800h7V1.500L18 10l-9.500 8.500v-4.300h-7z" fill="url(#go)" stroke="#5a9a2c" strokeWidth=".8" />
    </Svg>
  </div>
);

const builds: { title: string; tw: string; date: string; took: string; kw: string; user?: string }[] = [
  { title: "#5 GitHub", tw: "w-[65px]", date: "Dec 14, 2021 6:35:29 PM", took: "1.1 sec", kw: "w-[34px]", user: "group" },
  { title: "#3 Test", tw: "w-[47px]", date: "Dec 14, 2021 6:35:38 PM", took: "20 ms", kw: "w-[30px]" },
  { title: "#12 DockerHub", tw: "w-[99px]", date: "Dec 14, 2021 6:35:48 PM", took: "2 min 27 sec", kw: "w-[61px]" },
  { title: "#7 Kubernetes", tw: "w-[95px]", date: "Dec 14, 2021 6:38:23 PM", took: "11 sec", kw: "w-[32px]" },
  { title: "#2 Heroku", tw: "w-[67px]", date: "Dec 14, 2021 6:38:43 PM", took: "0.66 sec", kw: "w-[40px]" },
];

function BuildCard({ b }: { b: (typeof builds)[number] }) {
  return (
    <div className="w-[306px] rounded-[3px] bg-[#00ed40] p-1 text-[#333] shadow-[4px_4px_7px_rgba(60,60,60,0.800)]">
      <div className="flex h-[29px] items-center bg-[#b1fab6] pb-0.5 pl-1.5 text-[14px] leading-[27px] text-[#4a4540]"><Fit className={b.tw}>{b.title}</Fit></div>
      <div className="pt-[6px] text-[11px] leading-4">
        <div className="flex h-5 items-center"><Calendar /><Fit className="ml-[2px] w-[122px]">{b.date}</Fit></div>
        <div className="flex h-5 items-center"><Alarm /><Fit className={"ml-[2px] " + b.kw}>{b.took}</Fit></div>
        {b.user && <div className="flex h-5 items-center"><User /><Fit className="ml-[2px] w-[30px]">{b.user}</Fit></div>}
      </div>
      <div className="flex h-[22px] items-end justify-end gap-[3px]"><Console /><Retry /></div>
    </div>
  );
}

function Pipeline() {
  return (
    <div className="flex h-[373px] flex-col items-center bg-[#e4ebf3]">
      <Fit className="mt-[15px] mb-px w-[211px] text-[31px] font-bold leading-[44px] text-[#333]">Build Pipeline</Fit>
      <div className="mt-[13px] flex text-[11px] leading-4 text-[#333]">
        {actions.map((a) => (
          <div key={a.label} className="flex w-16 flex-col items-center">{a.icon}<Fit className={"mt-[7px] " + a.w}>{a.label}</Fit></div>
        ))}
      </div>
      <div className="mt-[17px] flex h-[176px] w-[1848px] items-start bg-[#ffb340] p-[10px]">
        <div className="mr-5 flex h-[100px] w-[100px] flex-col items-center rounded-[3px] bg-[#988d80] p-1 text-[14px] text-[#4a4540] shadow-[4px_4px_7px_rgba(60,60,60,0.800)]">
          <div className="flex h-[29px] w-full items-center justify-center bg-[#dfd9cc] pb-0.5 leading-[27px]"><Fit className="w-[51px]">Pipeline</Fit></div>
          <Fit className="w-[17px] leading-5">#5</Fit>
        </div>
        {builds.map((b, i) => (
          <div key={b.title} className="flex">{i > 0 && <Next />}<BuildCard b={b} /></div>
        ))}
      </div>
    </div>
  );
}

function ShareBar() {
  return (
    <div className="absolute bottom-[9px] left-[744px] flex h-[45px] w-[484px] items-center border border-[#bdbdbd] bg-[#4d4d4d] text-[15px] leading-6 text-[#e8e8e8] shadow-[0_1px_3px_rgba(0,0,0,0.400)]">
      <i className="ml-[10px] h-[11px] w-1.5 border-x-2 border-[#ddd]" />
      <Fit className="-mt-0.5 ml-[10px] w-[275px]">meet.google.com is sharing your screen.</Fit>
      <span className="ml-[10px] flex h-[34px] w-[119px] items-center justify-center rounded bg-[#f42616] pb-px text-[14px] font-bold text-white"><Fit className="w-[87px]">Stop sharing</Fit></span>
      <Fit className="-mt-0.5 ml-[10px] w-[32px] text-[#17a3dc]">Hide</Fit>
    </div>
  );
}

export default function App() {
  return (
    <div className="relative flex h-[1080px] w-[1920px] flex-col overflow-hidden bg-white font-['Noto_Sans','Open_Sans',sans-serif]">
      <TopBar />
      <div className="flex flex-1">
        <Dock />
        <div className="flex w-[1868px] flex-col">
          <TabStrip />
          <Toolbar />
          <Bookmarks />
          <JenkinsHeader />
          <Breadcrumbs />
          <Pipeline />
          <div className="mt-auto flex h-[57px] items-center justify-end border-t border-[#e9e9e9] bg-[#f8f8f8] pr-[20px] text-[13.500px] leading-5 text-[#333]">
            <Fit className="w-[57px]">REST API</Fit>
            <Fit className="ml-[41px] w-[97px]">Jenkins 2.319.1</Fit>
          </div>
        </div>
      </div>
      <ShareBar />
    </div>
  );
}
